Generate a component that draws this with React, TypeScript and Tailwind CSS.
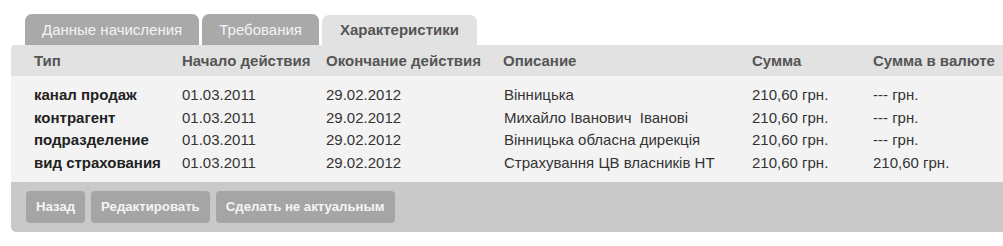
const tabs = [
  { label: "Данные начисления", active: false },
  { label: "Требования", active: false },
  { label: "Характеристики", active: true },
];

const rows = [
  ["канал продаж", "01.03.2011", "29.02.2012", "Вінницька", "210,60 грн.", "--- грн."],
  ["контрагент", "01.03.2011", "29.02.2012", "Михайло Іванович  Іванові", "210,60 грн.", "--- грн."],
  ["подразделение", "01.03.2011", "29.02.2012", "Вінницька обласна дирекція", "210,60 грн.", "--- грн."],
  ["вид страхования", "01.03.2011", "29.02.2012", "Страхування ЦВ власників НТ", "210,60 грн.", "210,60 грн."],
];

const cols = "grid grid-cols-[148px_144px_177px_249px_121px_1fr] pl-[23px]";

export default function App() {
  return (
    <div className="h-[246px] w-[1003px] overflow-hidden bg-white font-['Liberation_Sans',Arial,sans-serif] text-[15px]">
      <div className="flex gap-[3px] pl-[25px] pt-[14px]">
        {tabs.map((t) =>
          t.active ? (
            <div
              key={t.label}
              className="mt-[1px] flex h-[30px] w-[155px] items-center justify-center rounded-t-[7px] bg-[#e2e2e2] pt-[1px] font-bold text-[#555]"
            >
              {t.label}
            </div>
          ) : (
            <div
              key={t.label}
              className="flex h-[31px] items-center justify-center rounded-t-[7px] bg-[#a9a9a9] px-[17px] pt-[1px] text-[#f4f4f4]"
            >
              {t.label}
            </div>
          )
        )}
      </div>

      <div className="ml-[11px] w-[1010px] overflow-hidden rounded-tl-[4px] rounded-bl-[5px]">
        <div className={`${cols} h-[31px] items-center bg-[#e2e2e2] pt-[2px] font-bold text-[#555]`}>
          <div>Тип</div>
          <div>Начало действия</div>
          <div>Окончание действия</div>
          <div>Описание</div>
          <div>Сумма</div>
          <div>Сумма в валюте</div>
        </div>

        <div className="bg-[#f3f3f3] py-[8px] text-[#333]">
          {rows.map((r) => (
            <div key={r[0]} className={`${cols} h-[22.5px] items-center`}>
              <div className="font-bold text-[#222]">{r[0]}</div>
              <div>{r[1]}</div>
              <div>{r[2]}</div>
              <div className="whitespace-pre pl-[1px]">{r[3]}</div>
              <div>{r[4]}</div>
              <div>{r[5]}</div>
            </div>
          ))}
        </div>

        <div className="flex h-[50px] items-center gap-[6px] bg-[#c9c9c9] pl-[15px]">
          {["Назад", "Редактировать", "Сделать не актуальным"].map((b) => (
            <button
              key={b}
              className="h-[32px] rounded-[4px] bg-[#a5a5a5] px-[10px] text-[13.2px] font-bold text-[#f4f4f4]"
            >
              {b}
            </button>
          ))}
        </div>
      </div>
    </div>
  );
}
